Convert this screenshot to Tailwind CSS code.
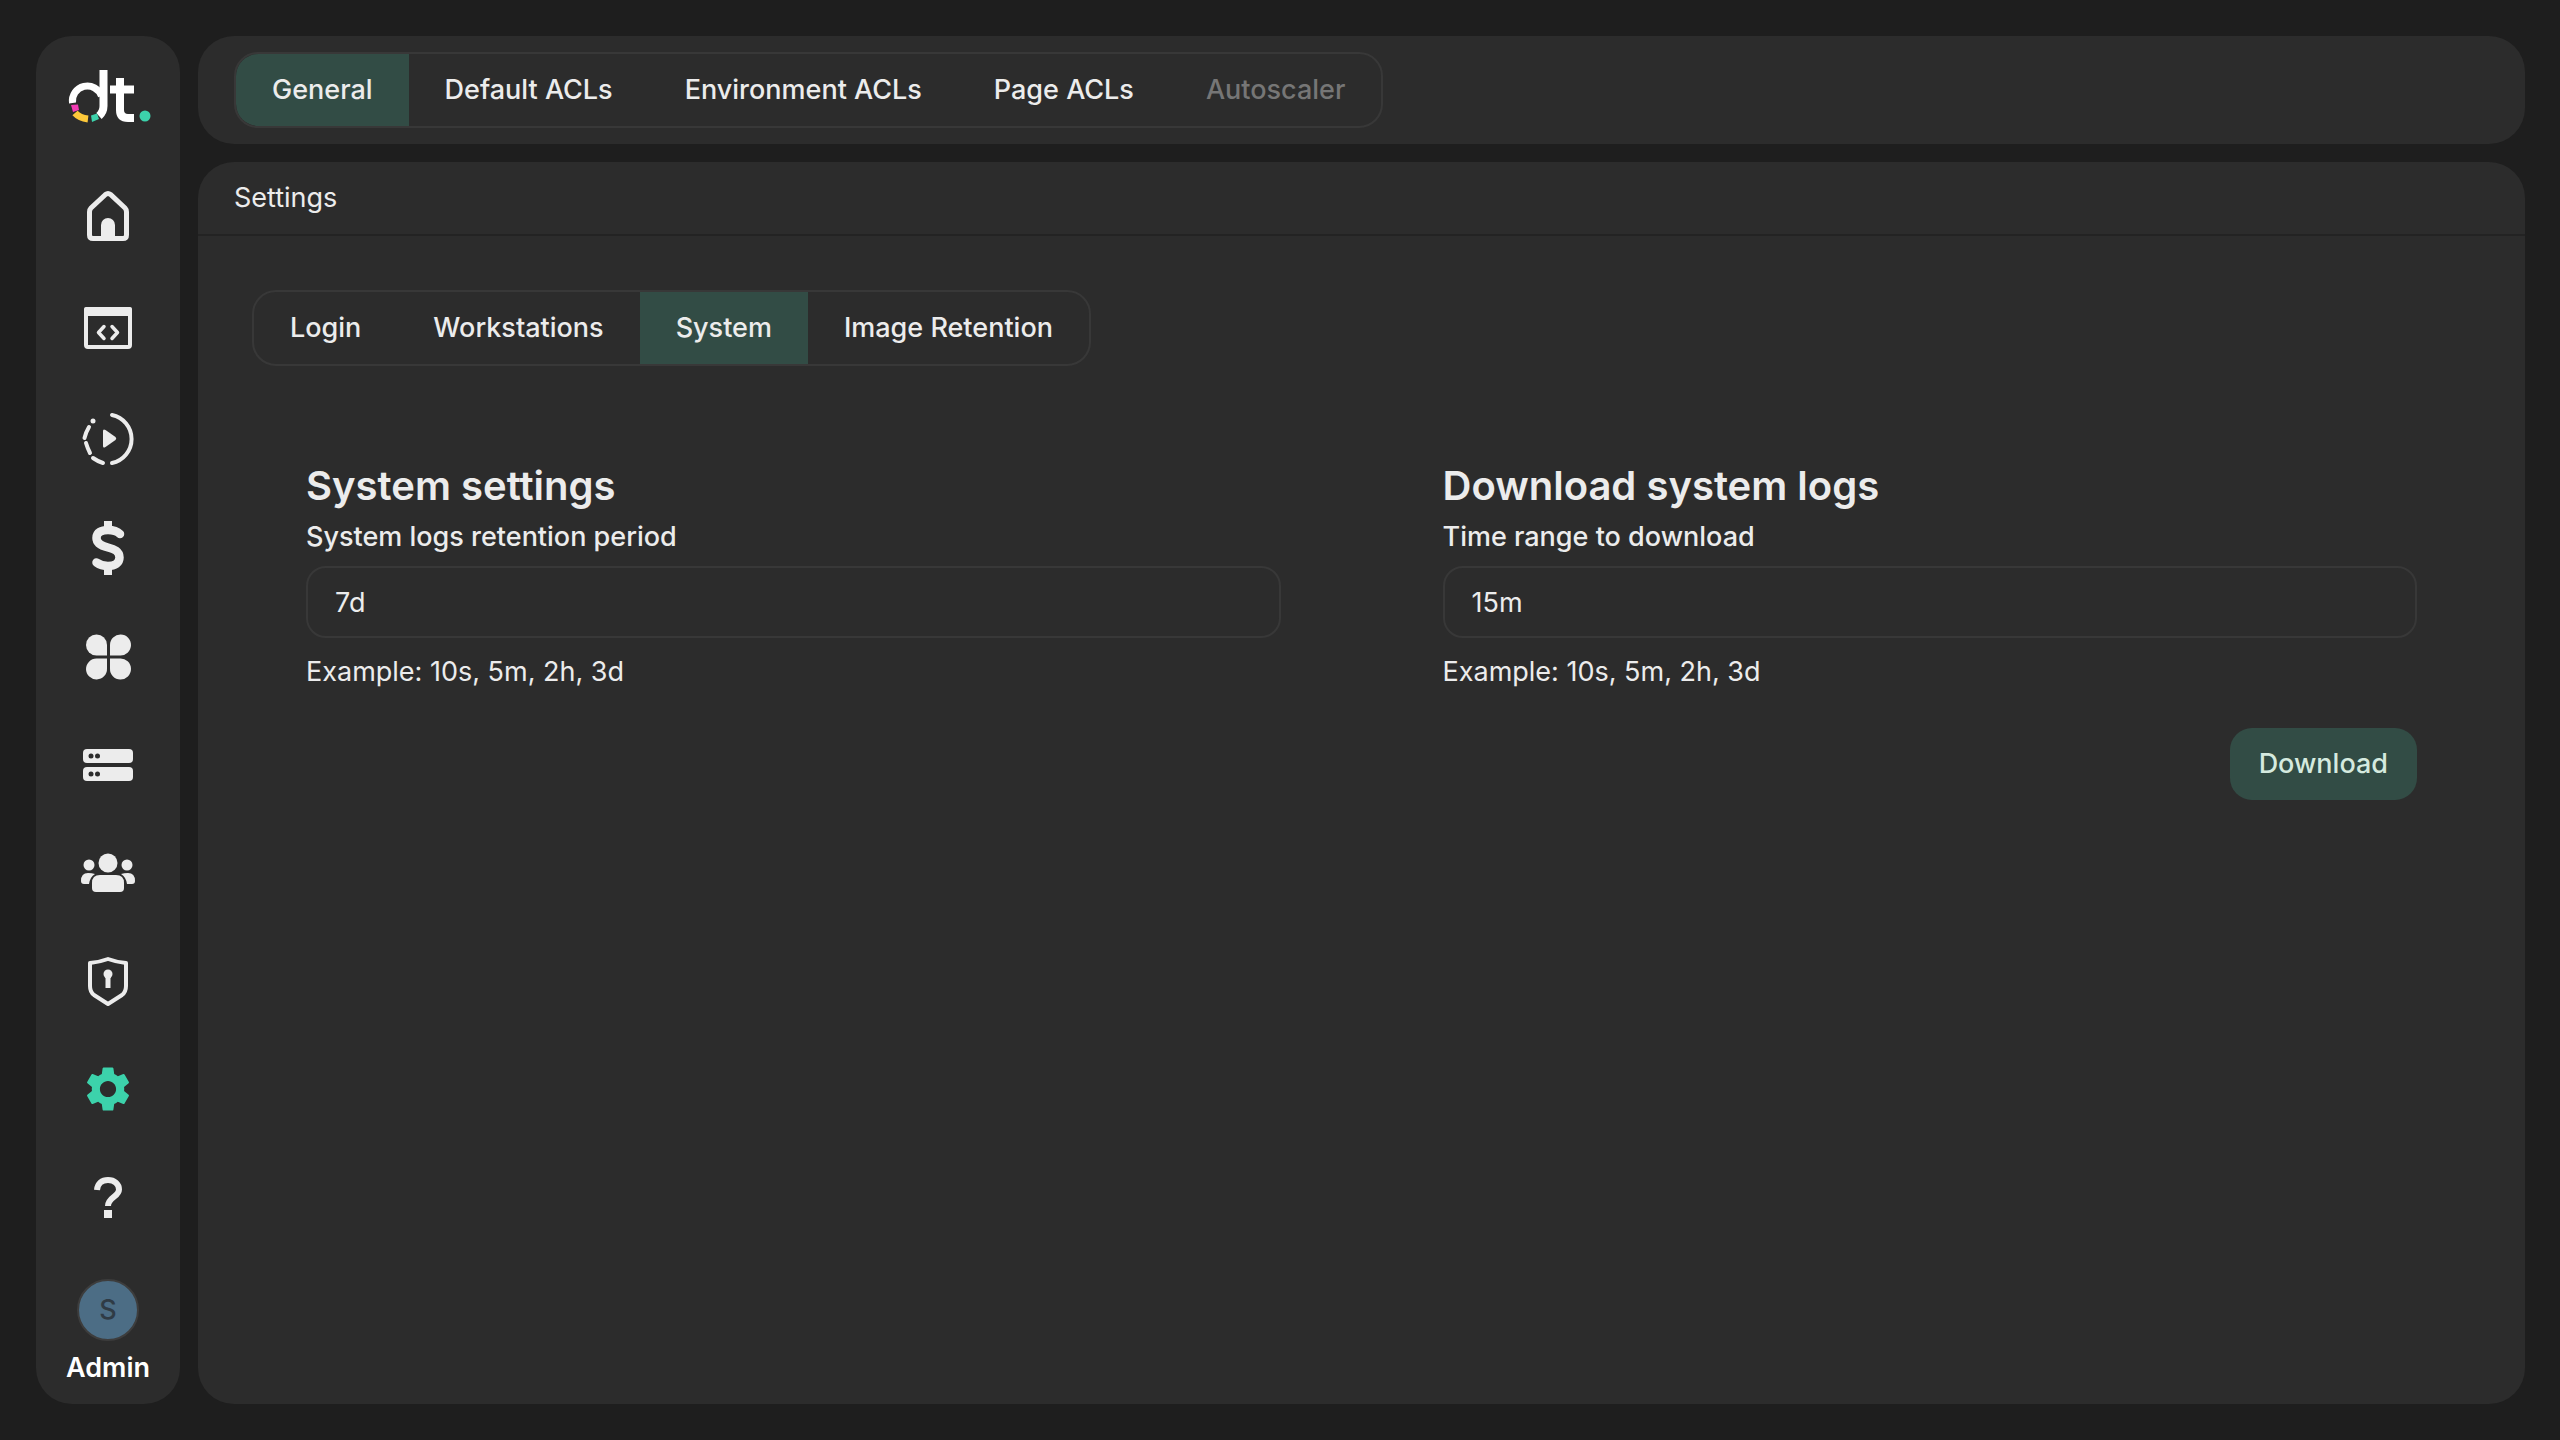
<!DOCTYPE html>
<html lang="en">
<head>
<meta charset="utf-8">
<title>Settings</title>
<script src="https://cdn.jsdelivr.net/npm/@tailwindcss/browser@4"></script>
</head>
<body class="bg-[#1e1e1e]">
<div class="flex w-[2560px] h-[1440px] pl-[36px] pr-[35px] py-[36px] gap-[18px] bg-[#1e1e1e] text-[#ececec] font-['Inter',sans-serif] text-[27px] leading-[40px]">
  <aside class="w-[144px] h-[1368px] shrink-0 rounded-[36px] bg-[#2c2c2c] flex flex-col items-center pt-[30px] text-[#ececec]">
    <svg class="w-[90px] h-[60px] shrink-0" viewBox="0 0 90 60" fill="none">
      <path d="M9.5 37 A15 15 0 0 1 38.5 30" stroke="#fff" stroke-width="7"/>
      <path d="M40.5 4 V40 Q40.5 46 36 50" stroke="#fff" stroke-width="8"/>
      <path d="M8 39 L15 38.5 L16 44 L10 46 Z" fill="#f23bb4"/>
      <path d="M12 47 Q16.5 52 25 53" stroke="#fdc93a" stroke-width="7"/>
      <path d="M28 49.5 L34 47.5 L36 53 L29 56 Z" fill="#3cd2ab"/>
      <path d="M47 23.5 H71 M57 12 V44 Q57 52 65 52 H71" stroke="#fff" stroke-width="8"/>
      <circle cx="82" cy="50" r="5.5" fill="#3cd2ab"/>
    </svg>
    <svg class="w-[64px] h-[64px] shrink-0 mt-[58px]" viewBox="0 0 64 64" fill="none">
      <path d="M29.5 10.5 L15 24 Q13.5 25.5 13.5 28 V51 Q13.5 54.5 17 54.5 H47 Q50.5 54.5 50.5 51 V28 Q50.5 25.5 49 24 L34.5 10.5 Q32 8.5 29.5 10.5Z" stroke="currentColor" stroke-width="5"/>
      <path d="M25 55 V41 a7 7 0 0 1 14 0 V55Z" fill="currentColor"/>
    </svg>
    <svg class="w-[64px] h-[64px] shrink-0 mt-[48px]" viewBox="0 0 64 64" fill="none">
      <rect x="10" y="13" width="44" height="38" rx="2" stroke="currentColor" stroke-width="4"/>
      <path d="M10 11 H54 Q56 11 56 13 V20 H8 V13 Q8 11 10 11Z" fill="currentColor"/>
      <path d="M28 30.5 L22.5 36.5 L28 42.5 M36 30.5 L41.5 36.5 L36 42.5" stroke="currentColor" stroke-width="3.5" stroke-linecap="round" stroke-linejoin="round"/>
    </svg>
    <svg class="w-[64px] h-[64px] shrink-0 mt-[47px]" viewBox="0 0 64 64" fill="none">
      <path d="M36 8 A24.5 24.5 0 0 1 36 56" stroke="currentColor" stroke-width="4" stroke-linecap="round"/>
      <path d="M13 20 Q10 25 8.5 31 M10 36 Q11.5 41 14 46 M17 51 Q22 54.5 27 56" stroke="currentColor" stroke-width="4" stroke-linecap="round"/>
      <circle cx="17" cy="14" r="2.5" fill="currentColor"/>
      <path d="M27 24 Q27 21.5 29.5 23 L39.5 30 Q41 31.5 39.5 33 L29.5 40 Q27 41.5 27 39Z" fill="currentColor"/>
    </svg>
    <svg class="w-[64px] h-[64px] shrink-0 mt-[45px]" viewBox="0 0 64 64" fill="none">
      <path d="M32 5 V13 M32 52 V59" stroke="currentColor" stroke-width="8"/>
      <path d="M44 18 C41 15 37 14 32 14 C25.5 14 20.5 16.5 20.5 22 C20.5 28.5 28 30.5 32 31.5 C38 33 43.5 35 43.5 41.5 C43.5 47 39 50 32 50 C27.5 50 24 49 20.5 46.5" stroke="currentColor" stroke-width="8.5" stroke-linecap="round"/>
    </svg>
    <svg class="w-[64px] h-[64px] shrink-0 mt-[44px]" viewBox="0 0 64 64" fill="currentColor">
      <path d="M31 31 V21 a10.5 10.5 0 1 0 -10.5 10.5 H31Z"/>
      <path d="M34 31 V21 a10.5 10.5 0 1 1 10 10.5 H34Z"/>
      <path d="M31 34.5 V44.5 a10.5 10.5 0 1 1 -10.5 -10 H31Z"/>
      <path d="M34 34.5 V44.5 a10.5 10.5 0 1 0 10 -10 H34Z"/>
    </svg>
    <svg class="w-[64px] h-[64px] shrink-0 mt-[45px]" viewBox="0 0 64 64" fill="none">
      <rect x="7" y="16" width="50" height="14" rx="4" fill="currentColor"/>
      <rect x="7" y="34" width="50" height="14" rx="4" fill="currentColor"/>
      <circle cx="15" cy="23" r="2.5" fill="#2c2c2c"/><circle cx="21.5" cy="23" r="2.5" fill="#2c2c2c"/>
      <circle cx="15" cy="41" r="2.5" fill="#2c2c2c"/><circle cx="21.5" cy="41" r="2.5" fill="#2c2c2c"/>
    </svg>
    <svg class="w-[64px] h-[64px] shrink-0 mt-[44px]" viewBox="0 0 64 64" fill="currentColor">
      <circle cx="32" cy="22" r="9.5"/>
      <circle cx="13" cy="24" r="5.5"/>
      <circle cx="51" cy="24" r="5.5"/>
      <path d="M16 47 V42 Q16 34 24 34 H40 Q48 34 48 42 V47 Q48 51 44 51 H20 Q16 51 16 47Z"/>
      <path d="M5 40 Q5 32 12 32 Q16 32 19 33 Q14 36 13 43 H8 Q5 43 5 40Z"/>
      <path d="M59 40 Q59 32 52 32 Q48 32 45 33 Q50 36 51 43 H56 Q59 43 59 40Z"/>
    </svg>
    <svg class="w-[64px] h-[64px] shrink-0 mt-[43px]" viewBox="0 0 64 64" fill="none">
      <path d="M32 11 Q40 14 50 15 V38 Q50 44 46 47 L32 56 L18 47 Q14 44 14 38 V15 Q24 14 32 11Z" stroke="currentColor" stroke-width="4" stroke-linejoin="round"/>
      <circle cx="32" cy="26" r="4.5" fill="currentColor"/>
      <rect x="29.5" y="26" width="5" height="14" fill="currentColor"/>
    </svg>
    <svg class="w-[64px] h-[64px] shrink-0 mt-[45px]" viewBox="-2.22 -2.22 28.44 28.44" fill="#3cd2ab">
      <path d="M19.14 12.94c.04-.3.06-.61.06-.94 0-.32-.02-.64-.07-.94l2.03-1.58c.18-.14.23-.41.12-.61l-1.92-3.32c-.12-.22-.37-.29-.59-.22l-2.39.96c-.5-.38-1.03-.7-1.62-.94l-.36-2.54c-.04-.24-.24-.41-.48-.41h-3.84c-.24 0-.43.17-.47.41l-.36 2.54c-.59.24-1.13.57-1.62.94l-2.39-.96c-.22-.08-.47 0-.59.22L2.74 8.87c-.12.21-.08.47.12.61l2.03 1.58c-.05.3-.09.63-.09.94s.02.64.07.94l-2.03 1.58c-.18.14-.23.41-.12.61l1.92 3.32c.12.22.37.29.59.22l2.39-.96c.5.38 1.03.7 1.62.94l.36 2.54c.05.24.24.41.48.41h3.84c.24 0 .44-.17.47-.41l.36-2.54c.59-.24 1.13-.56 1.62-.94l2.39.96c.22.08.47 0 .59-.22l1.92-3.32c.12-.22.07-.47-.12-.61l-2.01-1.58zM12 15.6c-1.98 0-3.6-1.62-3.6-3.6s1.62-3.6 3.6-3.6 3.6 1.62 3.6 3.6-1.62 3.6-3.6 3.6z"/>
    </svg>
    <svg class="w-[64px] h-[64px] shrink-0 mt-[44px]" viewBox="0 0 64 64" fill="none">
      <path d="M21 25 C21.5 18.5 26 15 32 15 C38.5 15 43 19 43 24.5 C43 32 32 32 32 41" stroke="currentColor" stroke-width="6"/>
      <rect x="28" y="45" width="8" height="8" fill="currentColor"/>
    </svg>
    <div class="w-[62px] h-[62px] mt-[50px] shrink-0 rounded-full bg-[#4c6d85] border-2 border-[#3d3d3d] flex items-center justify-center text-[#2f3b45] text-[27px] font-medium">S</div>
    <div class="mt-[7px] font-semibold text-white">Admin</div>
  </aside>
  <main class="flex-1 flex flex-col gap-[18px] min-w-0">
    <header class="h-[108px] shrink-0 rounded-[36px] bg-[#2c2c2c] px-[36px] flex items-center">
      <nav class="flex h-[76px] border-2 border-[#383838] rounded-[24px] overflow-hidden font-medium">
        <a class="flex items-center px-[36px] bg-[#324c45] rounded-l-[22px]">General</a>
        <a class="flex items-center px-[36px]">Default ACLs</a>
        <a class="flex items-center px-[36px]">Environment ACLs</a>
        <a class="flex items-center px-[36px]">Page ACLs</a>
        <a class="flex items-center px-[36px] text-[#767676]">Autoscaler</a>
      </nav>
    </header>
    <section class="flex-1 rounded-[36px] bg-[#2c2c2c] min-h-0">
      <div class="h-[74px] px-[36px] flex items-center border-b-2 border-[#232323]">Settings</div>
      <div class="pt-[54px] pl-[54px] pr-[108px]">
        <nav class="flex w-fit h-[76px] border-2 border-[#383838] rounded-[24px] overflow-hidden font-medium">
          <a class="flex items-center px-[36px]">Login</a>
          <a class="flex items-center px-[36px]">Workstations</a>
          <a class="flex items-center px-[36px] bg-[#324c45]">System</a>
          <a class="flex items-center px-[36px]">Image Retention</a>
        </nav>
        <div class="grid grid-cols-2 gap-[162px] mt-[96px] ml-[54px]">
          <div>
            <h2 class="text-[40px] leading-[48px] font-semibold">System settings</h2>
            <label class="block mt-[7px] font-medium">System logs retention period</label>
            <div class="mt-[9px] h-[72px] border-2 border-[#383838] rounded-[20px] px-[27px] pt-[2px] flex items-center">7d</div>
            <p class="mt-[14px]">Example: 10s, 5m, 2h, 3d</p>
          </div>
          <div>
            <h2 class="text-[40px] leading-[48px] font-semibold">Download system logs</h2>
            <label class="block mt-[7px] font-medium">Time range to download</label>
            <div class="mt-[9px] h-[72px] border-2 border-[#383838] rounded-[20px] px-[27px] pt-[2px] flex items-center">15m</div>
            <p class="mt-[14px]">Example: 10s, 5m, 2h, 3d</p>
            <div class="flex justify-end mt-[36px]">
              <button class="h-[72px] px-[29px] rounded-[22px] bg-[#324c45] text-[#d5eadf] font-medium">Download</button>
            </div>
          </div>
        </div>
      </div>
    </section>
  </main>
</div>
</body>
</html>
